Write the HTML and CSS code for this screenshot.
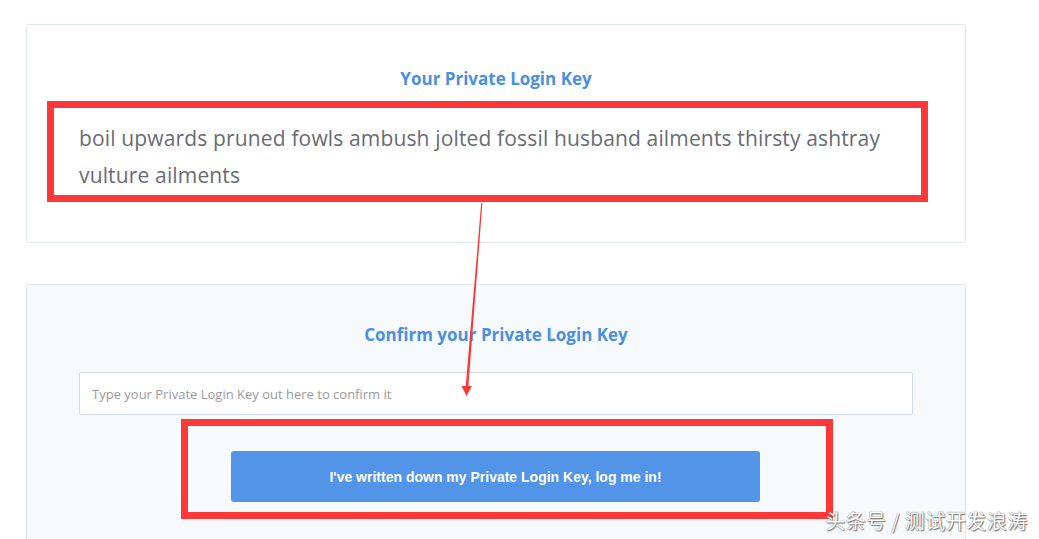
FILE: index.html
```html
<!DOCTYPE html>
<html lang="en">
<head>
  <meta charset="UTF-8" />
  <meta name="viewport" content="width=device-width, initial-scale=1.0"/>
  <title>Private Login Key</title>
  <link rel="stylesheet" href="styles.css">
</head>
<body>

  <!-- Key display -->
  <div class="card">
    <h2 class="card-title">Your Private Login Key</h2>
    <div class="mark key-mark">
      <p class="login-key">boil upwards pruned fowls ambush jolted fossil husband ailments thirsty ashtray vulture ailments</p>
    </div>
  </div>

  <!-- Confirm -->
  <div class="card card-confirm">
    <h2 class="card-title">Confirm your Private Login Key</h2>
    <input type="text" class="key-input" placeholder="Type your Private Login Key out here to confirm it" />
    <div class="mark btn-mark">
      <button class="login-btn">I've written down my Private Login Key, log me in!</button>
    </div>
  </div>

  <!-- annotation arrow -->
  <svg class="arrow" width="1039" height="539" viewBox="0 0 1039 539">
    <polygon points="481.2,203 482.4,203 468.2,388 465.6,388" fill="#fc3535" />
    <polygon points="461.5,386 471.8,386 466.6,396" fill="#fc3535" />
  </svg>

  <div class="watermark">头条号 / 测试开发浪涛</div>

</body>
</html>
```

FILE: styles.css
```css
* { box-sizing: border-box; }

body {
  margin: 0;
  padding: 24px 0 0 26px;
  background-color: #fff;
  font-family: "Open Sans", sans-serif;
  overflow: hidden;
}

.card {
  width: 940px;
  border: 1px solid #dfe6ef;
  border-radius: 3px;
  background-color: #fff;
  padding: 42px 52px 40px;
  margin-bottom: 41px;
}

.card-confirm {
  background-color: #f7fafd;
  padding-top: 38px;
}

.card-title {
  margin: 0 0 10px;
  text-align: center;
  font-size: 17px;
  line-height: 24px;
  font-weight: 700;
  color: #4a8fe2;
}

.card-confirm .card-title {
  margin-bottom: 25px;
}

/* red annotation boxes */
.mark {
  border: 7px solid #fd3838;
}

.key-mark {
  margin: 0 -15px 0 -32px;
  padding: 12px 8px 1px 25px;
}

.login-key {
  margin: 0;
  font-size: 21px;
  line-height: 37px;
  letter-spacing: 0.15px;
  color: #686c73;
}

.key-input {
  display: block;
  width: 100%;
  height: 43px;
  margin: 0 0 4px;
  padding: 0 12px;
  border: 1px solid #cfdbe9;
  border-radius: 2px;
  background-color: #fff;
  font-family: "Open Sans", sans-serif;
  font-size: 13px;
}

.key-input::placeholder {
  color: #9a9a9a;
}

.btn-mark {
  width: 652px;
  margin-left: 102px;
  padding: 25px 66px 10px 43px;
}

.login-btn {
  display: block;
  width: 100%;
  height: 51px;
  border: none;
  border-radius: 3px;
  background-color: #5294e8;
  color: #fff;
  font-family: "Liberation Sans", Arial, sans-serif;
  font-size: 14px;
  font-weight: 700;
  cursor: pointer;
}

.arrow {
  position: absolute;
  left: 0;
  top: 0;
  pointer-events: none;
}

.watermark {
  position: absolute;
  left: 825px;
  top: 507px;
  font-family: "Noto Sans CJK SC", sans-serif;
  font-size: 20px;
  line-height: 28px;
  letter-spacing: 0.5px;
  color: #fff;
  text-shadow: 0 0 1px #555, 1px 1px 1px #777;
}
```
